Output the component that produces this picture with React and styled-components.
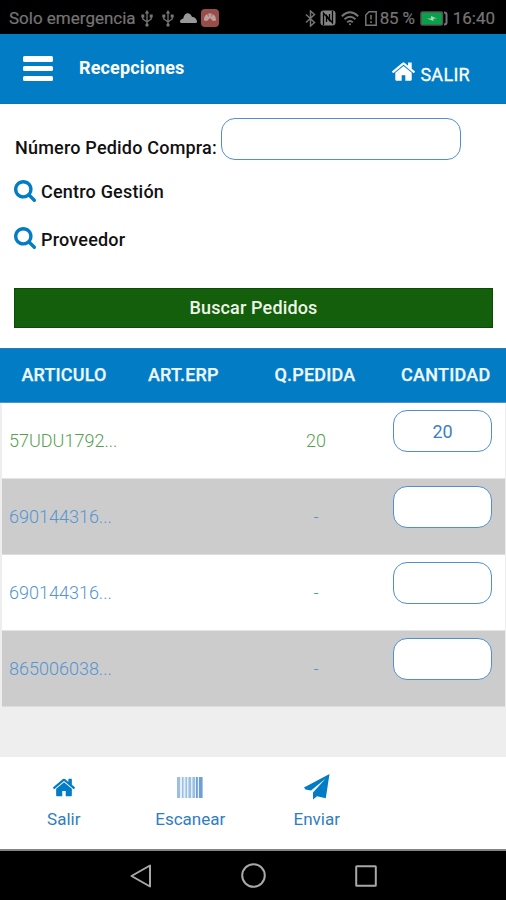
import React from "react";
import styled, { createGlobalStyle } from "styled-components";

const Global = createGlobalStyle`
  * { box-sizing: border-box; }
  body { margin: 0; background: #000; }
`;

const blue = "#027dc5";

const Screen = styled.div`
  width: 506px;
  height: 900px;
  display: flex;
  flex-direction: column;
  overflow: hidden;
  background: #eee;
  font-family: Roboto, sans-serif;
  font-size: 18px;
`;

const StatusBar = styled.div`
  height: 34px;
  display: flex;
  align-items: center;
  justify-content: space-between;
  padding: 2px 11px 0 9px;
  background: #000;
  color: #757575;
  font-size: 17px;
`;

const StatusGroup = styled.div`
  display: flex;
  align-items: center;
`;

const StatusText = styled.span`
  white-space: nowrap;
  letter-spacing: ${(p) => p.$spacing || 0}px;
  margin-left: ${(p) => p.$left || 0}px;
  -webkit-text-stroke: 0.2px currentColor;
`;

const Icon = styled.svg`
  display: block;
  flex: none;
  width: ${(p) => p.$w}px;
  height: ${(p) => p.$h || p.$w}px;
  margin-left: ${(p) => p.$left || 0}px;
  fill: ${(p) => (p.$line ? "none" : "currentColor")};
  stroke: ${(p) => (p.$line ? "currentColor" : "none")};
`;

const Header = styled.header`
  height: 70px;
  display: flex;
  align-items: center;
  padding: 0 36px 2px 23px;
  background: ${blue};
  border-bottom: 1px solid #1370bd;
  color: #fff;
`;

const MenuButton = styled.button`
  width: 30px;
  height: 25px;
  display: flex;
  flex-direction: column;
  justify-content: space-between;
  margin-top: 2px;
  padding: 0;
  border: 0;
  background: none;
`;

const MenuBar = styled.span`
  height: 5.5px;
  border-radius: 1.5px;
  background: #fff;
`;

const Title = styled.h1`
  flex: 1;
  margin: 0 0 0 26px;
  font-size: 18px;
  line-height: 24px;
  font-weight: 700;
  letter-spacing: 0.15px;
`;

const Exit = styled.a`
  display: flex;
  align-items: center;
  gap: 5px;
  -webkit-text-stroke: 0.3px #fff;
`;

const ExitIcon = styled.span`
  padding-top: 8px;
`;

const ExitLabel = styled.span`
  padding-top: 14px;
  letter-spacing: 0.3px;
`;

const Form = styled.section`
  height: 244px;
  padding: 14px 14px 0;
  background: #fff;
  color: #111;
  font-weight: 500;
  letter-spacing: 0.2px;
`;

const Field = styled.label`
  height: 44px;
  display: flex;
  align-items: flex-start;
  justify-content: space-between;
  padding-right: 31px;
`;

const FieldLabel = styled.span`
  padding: 19px 0 0 1px;
  line-height: 21px;
  white-space: nowrap;
`;

const Input = styled.input`
  width: ${(p) => p.$w}px;
  height: 42px;
  padding: 0;
  border: 1px solid #5090d0;
  border-radius: 14px;
  background: #fff;
  color: #3d80c4;
  font: 400 18px Roboto, sans-serif;
  text-align: center;
  outline: none;
`;

const Lookup = styled.div`
  height: ${(p) => p.$h}px;
  display: flex;
  align-items: center;
  gap: 5px;
  color: ${blue};
`;

const LookupLabel = styled.span`
  padding-top: 2px;
  color: #111;
`;

const SearchButton = styled.button`
  width: 479px;
  height: 40px;
  display: block;
  margin-top: 31px;
  padding: 0 0 2px;
  border: 1px solid #0c4a08;
  background: #145f0b;
  color: #eef5e8;
  font: 500 18px Roboto, sans-serif;
  letter-spacing: 0.15px;
`;

const TableHead = styled.div`
  height: 55px;
  display: grid;
  grid-template-columns: repeat(4, 126.5px);
  align-items: center;
  padding-bottom: 2px;
  background: ${blue};
  border-top: 1px solid #2b7ab8;
  border-bottom: 1px solid #5590c8;
  color: #eef6ff;
  font-weight: 500;
`;

const HeadCell = styled.span`
  padding-left: 21.5px;
  white-space: nowrap;
  letter-spacing: ${(p) => p.$spacing || 0.15}px;
  -webkit-text-stroke: 0.25px currentColor;
`;

const Row = styled.div`
  height: 76px;
  display: grid;
  grid-template-columns: 252px 124px 1fr;
  margin: 0 1px 0 2px;
  background: ${(p) => (p.$shaded ? "#ccc" : "#fff")};
  border-bottom: 1px solid ${(p) => (p.$shaded ? "#ddd" : "#e4e4e4")};
  color: ${(p) => (p.$done ? "#57a050" : "#5595d2")};
  font-weight: 300;
`;

const Code = styled.span`
  padding: 27px 0 0 7px;
  line-height: 21px;
`;

const Quantity = styled.span`
  padding-top: 27px;
  line-height: 21px;
  text-align: center;
`;

const Amount = styled.div`
  padding: 7px 0 0 15px;
`;

const Tabs = styled.nav`
  height: 94px;
  display: grid;
  grid-template-columns: repeat(4, 126.5px);
  margin-top: auto;
  background: #fff;
  border-bottom: 2px solid #858585;
  color: ${blue};
`;

const Tab = styled.a`
  display: flex;
  flex-direction: column;
  align-items: center;
  padding-left: 1px;
  font-size: 17px;
  font-weight: 400;
`;

const TabIcon = styled.span`
  height: 51px;
  display: flex;
  align-items: center;
  padding-top: 9px;
`;

const TabLabel = styled.span`
  line-height: 22px;
  color: #307dc2;
`;

const AndroidNav = styled.div`
  height: 49px;
  display: flex;
  justify-content: center;
  align-items: center;
  gap: 89px;
  background: #000;
  color: #a8a8a8;
`;

const Home = (p) => (
  <Icon viewBox="89 253 1614 1283" {...p}>
    <path d="M1472 992v480q0 26-19 45t-45 19h-384v-384h-256v384h-384q-26 0-45-19t-19-45v-480q0-1 .5-3t.5-3l575-474 575 474q1 2 1 6zm223-69l-62 74q-8 9-21 11h-3q-13 0-21-7l-692-577-692 577q-12 8-24 7-13-2-21-11l-62-74q-8-10-7-23.500t11-21.500l719-599q32-26 76-26t76 26l244 204v-195q0-14 9-23t23-9h192q14 0 23 9t9 23v408l219 182q10 8 11 21.500t-7 23.500z" />
  </Icon>
);

const Search = () => (
  <Icon $w={22} viewBox="64 128 1664 1664">
    <path d="M1216 832q0-185-131.500-316.500t-316.500-131.500-316.500 131.500-131.500 316.500 131.500 316.500 316.500 131.500 316.500-131.500 131.500-316.500zm512 832q0 52-38 90t-90 38q-54 0-90-38l-343-342q-179 124-399 124-143 0-273.500-55.500t-225-150-150-225-55.500-273.500 55.500-273.500 150-225 225-150 273.500-55.500 273.500 55.500 225 150 150 225 55.500 273.500q0 220-124 399l343 343q37 37 37 90z" />
  </Icon>
);

const Plane = () => (
  <Icon $w={26} viewBox="0 0 26 26">
    <path d="M25.500 0 0 13.500 1.500 15.500 7 16.500 21.500 4.800 9 18.500V25.500l4-3.300 8.800 2z" />
  </Icon>
);

const Usb = (p) => (
  <Icon $w={12} $h={17} viewBox="0 0 12 17" $line strokeWidth="1.3" {...p}>
    <path d="M6 2v13M1.800 6v3L6 12M10.200 6v3L6 12" />
    <path fill="currentColor" stroke="none" d="M6 0l2.200 3.500H3.800zM.3 4.500h3v3h-3zM8.700 4.500h3v3h-3z" />
    <circle cx="6" cy="15" r="1.700" fill="currentColor" stroke="none" />
  </Icon>
);

const Barcode = () => (
  <Icon $w={26} $h={21} viewBox="0 0 26 21">
    <path fill="#e3effa" d="M0 0h26v21H0z" />
    <path fill="#9cbfe0" d="M0 0h3v21H0zM5 0h1.500v21H5zM8.500 0H10v21H8.500zM11.500 0H14v21h-2.500zM15.500 0H18v21h-2.500z" />
    <path fill="#6f9fd5" d="M19 0h1.800v21H19zM22 0h3.500v21H22z" />
  </Icon>
);

const rows = [
  { code: "57UDU1792...", ordered: "20", amount: "20", done: true },
  { code: "690144316...", ordered: "-", amount: "" },
  { code: "690144316...", ordered: "-", amount: "" },
  { code: "865006038...", ordered: "-", amount: "" },
];

export default function App() {
  return (
    <Screen>
      <Global />
      <StatusBar>
        <StatusGroup>
          <StatusText>Solo emergencia</StatusText>
          <Usb $left={5} />
          <Usb $left={9} />
          <Icon $w={17} $h={10} $left={6} viewBox="0 0 17 10">
            <path fill="#999" d="M1.500 10Q0 10 0 8.500C0 6.500 2 6 3.200 5.500 4 1.500 6-.2 8.200.2c2 .3 3 1.600 3.700 3.600C15 4 17 6.500 17 8.700c0 .8-.5 1.300-1.300 1.300z" />
          </Icon>
          <Icon $w={18} $left={4} viewBox="0 0 18 18">
            <rect width="18" height="18" rx="4" fill="#984d4a" />
            <path fill="#bda09d" d="M3 11.500C3 6.500 5.500 4.500 9 4.500s6 2 6 7l-3 .5-3-3-3 3z" />
            <path stroke="#984d4a" strokeWidth=".8" d="M6.500 4.500l1 3M11.500 4.500l-1 3" />
          </Icon>
        </StatusGroup>
        <StatusGroup>
          <Icon $w={11} $h={17} viewBox="0 0 11 17" $line strokeWidth="1.500">
            <path d="M1 4.500l8.500 8L5.500 16V1l4 3.500-8.500 8" />
          </Icon>
          <Icon $w={16} $left={4} viewBox="0 0 16 16">
            <rect x=".5" y=".5" width="15" height="15" rx="3" fill="#858585" />
            <path fill="none" stroke="#000" strokeWidth="1.300" d="M3.500 15V3l6 7.500V4M12.500 1v12l-6-7.500V12" />
          </Icon>
          <Icon $w={18} $h={15} $left={5} viewBox="0 0 18 15" $line strokeWidth="1.900">
            <path d="M.8 5.200Q9-2.500 17.200 5.200M3.500 8.300q5.500-5 11 0M6.200 11.200q2.800-2.500 5.600 0" />
            <circle cx="9" cy="13.200" r="1" fill="currentColor" stroke="none" />
          </Icon>
          <Icon $w={12} $h={15} $left={6} viewBox="0 0 12 15" $line strokeWidth="1.500">
            <path d="M4 .8h7.200v13.400H.8V4zM6 4v4.500M6 10v2" />
          </Icon>
          <StatusText $left={3} $spacing={-0.2}>85 %</StatusText>
          <Icon $w={28} $h={15} $left={5} viewBox="0 0 28 15">
            <rect x="1" y="1" width="21.500" height="13" rx="1.500" fill="#0aa04a" stroke="#555" strokeWidth="1.500" />
            <path fill="#a6d6b5" d="M7 7.500h4V5l6 2.500h-3.500V10z" />
            <path fill="none" stroke="#777" strokeWidth="2" d="M24 1.500q2.500 0 2.500 2v8q0 2-2.500 2" />
          </Icon>
          <StatusText $left={5}>16:40</StatusText>
        </StatusGroup>
      </StatusBar>

      <Header>
        <MenuButton aria-label="Menú"><MenuBar /><MenuBar /><MenuBar /></MenuButton>
        <Title>Recepciones</Title>
        <Exit>
          <ExitIcon><Home $w={23} $h={19} /></ExitIcon>
          <ExitLabel>SALIR</ExitLabel>
        </Exit>
      </Header>

      <Form>
        <Field>
          <FieldLabel>Número Pedido Compra:</FieldLabel>
          <Input $w={240} />
        </Field>
        <Lookup $h={57}><Search /><LookupLabel>Centro Gestión</LookupLabel></Lookup>
        <Lookup $h={38}><Search /><LookupLabel>Proveedor</LookupLabel></Lookup>
        <SearchButton>Buscar Pedidos</SearchButton>
      </Form>

      <TableHead>
        <HeadCell>ARTICULO</HeadCell>
        <HeadCell>ART.ERP</HeadCell>
        <HeadCell $spacing={0.2}>Q.PEDIDA</HeadCell>
        <HeadCell $spacing={0.25}>CANTIDAD</HeadCell>
      </TableHead>
      {rows.map((r, i) => (
        <Row key={i} $shaded={i % 2 === 1} $done={r.done}>
          <Code>{r.code}</Code>
          <Quantity>{r.ordered}</Quantity>
          <Amount><Input $w={99} defaultValue={r.amount} /></Amount>
        </Row>
      ))}

      <Tabs>
        <Tab><TabIcon><Home $w={22} $h={19} /></TabIcon><TabLabel>Salir</TabLabel></Tab>
        <Tab><TabIcon><Barcode /></TabIcon><TabLabel>Escanear</TabLabel></Tab>
        <Tab><TabIcon><Plane /></TabIcon><TabLabel>Enviar</TabLabel></Tab>
      </Tabs>
      <AndroidNav>
        <Icon $w={22} $h={24} viewBox="0 0 22 24" $line strokeWidth="2">
          <path strokeLinejoin="round" d="M20 1.500v21L1.500 12z" />
        </Icon>
        <Icon $w={25} viewBox="0 0 25 25" $line strokeWidth="2"><circle cx="12.500" cy="12.500" r="11.300" /></Icon>
        <Icon $w={22} viewBox="0 0 22 22" $line strokeWidth="2"><rect x="1.200" y="1.200" width="19.600" height="19.600" rx=".5" /></Icon>
      </AndroidNav>
    </Screen>
  );
}
